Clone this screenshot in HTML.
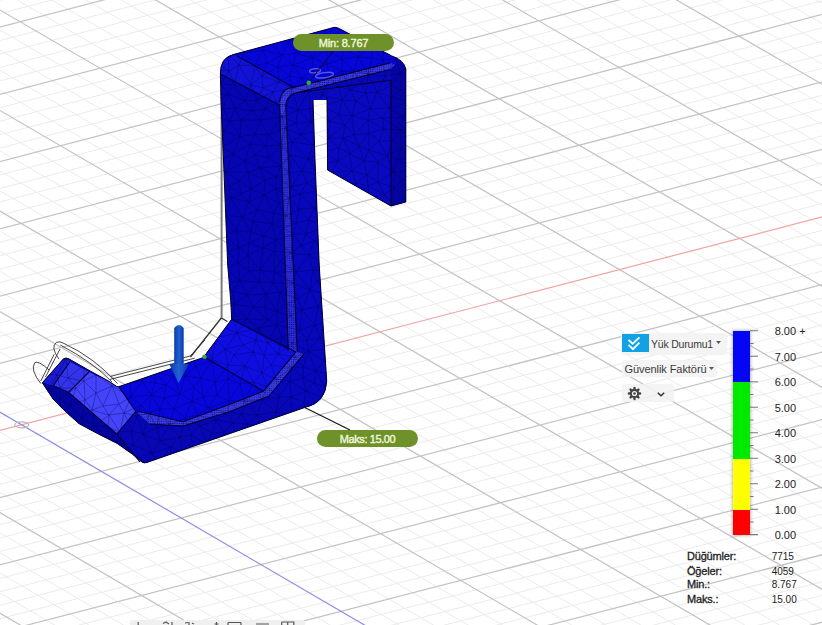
<!DOCTYPE html>
<html><head><meta charset="utf-8"><style>
html,body{margin:0;padding:0;background:#fff;width:822px;height:625px;overflow:hidden}
body{position:relative;font-family:"Liberation Sans",sans-serif}
svg.v{position:absolute;left:0;top:0}
</style></head><body>
<svg class="v" width="822" height="625" viewBox="0 0 822 625">
<defs><filter id="bl" x="-1%" y="-1%" width="102%" height="102%"><feGaussianBlur stdDeviation="0.45"/></filter></defs>
<g filter="url(#bl)"><path d="M447.1 1257.8L-1453.3 141.3M471.1 1251.8L-1429.9 135.1M495 1245.7L-1406.5 128.9M519 1239.6L-1383 122.8M566.9 1227.4L-1336.1 110.4M590.9 1221.3L-1312.7 104.2M614.9 1215.2L-1289.2 98M638.9 1209.1L-1265.8 91.8M686.9 1196.9L-1218.8 79.5M710.9 1190.8L-1195.3 73.3M735 1184.7L-1171.8 67.1M759 1178.6L-1148.3 60.9M807.1 1166.4L-1101.3 48.5M831.1 1160.3L-1077.8 42.3M855.2 1154.1L-1054.2 36.1M879.2 1148L-1030.7 29.9M927.4 1135.8L-983.6 17.5M951.5 1129.7L-960.1 11.3M975.6 1123.6L-936.5 5M999.7 1117.4L-912.9 -1.2M1047.9 1105.2L-865.8 -13.6M1072 1099L-842.2 -19.8M1096.1 1092.9L-818.6 -26M1120.3 1086.8L-795 -32.3M1168.5 1074.5L-747.8 -44.7M1192.7 1068.4L-724.2 -50.9M1216.9 1062.2L-700.6 -57.2M1241 1056.1L-676.9 -63.4M1289.4 1043.8L-629.6 -75.9M1313.6 1037.7L-606 -82.1M1337.8 1031.5L-582.3 -88.3M1362 1025.4L-558.7 -94.6M1410.4 1013L-511.3 -107.1M1434.6 1006.9L-487.6 -113.3M1458.8 1000.7L-463.9 -119.5M1483.1 994.6L-440.2 -125.8M1531.5 982.3L-392.8 -138.3M1555.8 976.1L-369.1 -144.5M1580.1 969.9L-345.4 -150.8M1604.3 963.8L-321.6 -157.1M1652.9 951.4L-274.2 -169.6M1677.2 945.2L-250.4 -175.8M1701.5 939.1L-226.6 -182.1M1725.8 932.9L-202.9 -188.4M1774.4 920.5L-155.3 -200.9M1798.7 914.4L-131.5 -207.2M1823.1 908.2L-107.8 -213.4M1847.4 902L-84 -219.7M1896.1 889.6L-36.3 -232.3M1920.4 883.4L-12.5 -238.6M1944.8 877.2L11.3 -244.8M1969.2 871L35.1 -251.1M2017.9 858.6L82.8 -263.7M2042.3 852.4L106.7 -270M2066.7 846.2L130.5 -276.3M2091.1 840L154.4 -282.6M2140 827.6L202.1 -295.1M2164.4 821.4L226 -301.4M2188.8 815.2L249.9 -307.7M2213.3 809L273.8 -314M2262.2 796.6L321.6 -326.6M2286.6 790.4L345.6 -333M2311.1 784.1L369.5 -339.3M2335.6 777.9L393.4 -345.6M2384.6 765.5L441.3 -358.2M2409.1 759.2L465.3 -364.5M2433.6 753L489.2 -370.8M2458.1 746.8L513.2 -377.1M2507.1 734.3L561.1 -389.8M2531.6 728.1L585.1 -396.1M2556.2 721.9L609.1 -402.4M2580.7 715.6L633.1 -408.8M2629.8 703.1L681.1 -421.4M2654.4 696.9L705.2 -427.8M2679 690.6L729.2 -434.1M2703.6 684.4L753.2 -440.4M2752.7 671.9L801.3 -453.1M2777.3 665.6L825.4 -459.4M2802 659.4L849.4 -465.8M2826.6 653.1L873.5 -472.1M8.7 1221.4L2916.4 479.9M-7.2 1212L2899.9 470.4M-23.1 1202.6L2883.4 461M-39.1 1193.3L2867 451.5M-70.9 1174.5L2834 432.6M-86.8 1165.2L2817.6 423.1M-102.7 1155.8L2801.1 413.7M-118.6 1146.4L2784.7 404.2M-150.4 1127.7L2751.8 385.3M-166.3 1118.3L2735.3 375.8M-182.2 1109L2718.9 366.4M-198.1 1099.6L2702.5 356.9M-229.9 1080.9L2669.6 338M-245.8 1071.5L2653.2 328.6M-261.7 1062.2L2636.7 319.2M-277.6 1052.8L2620.3 309.7M-309.3 1034.1L2587.5 290.8M-325.2 1024.8L2571.1 281.4M-341.1 1015.5L2554.7 272M-356.9 1006.1L2538.3 262.5M-388.6 987.4L2505.5 243.7M-404.5 978.1L2489.1 234.3M-420.4 968.8L2472.7 224.8M-436.2 959.4L2456.3 215.4M-467.9 940.8L2423.5 196.6M-483.7 931.4L2407.1 187.1M-499.6 922.1L2390.7 177.7M-515.4 912.8L2374.4 168.3M-547.1 894.1L2341.6 149.5M-562.9 884.8L2325.3 140.1M-578.7 875.5L2308.9 130.7M-594.6 866.2L2292.5 121.3M-626.2 847.6L2259.8 102.5M-642 838.3L2243.5 93.1M-657.8 829L2227.1 83.7M-673.6 819.6L2210.8 74.3M-705.2 801L2178.1 55.5M-721 791.7L2161.8 46.1M-736.8 782.4L2145.4 36.7M-752.6 773.1L2129.1 27.3M-784.2 754.5L2096.4 8.6M-800 745.2L2080.1 -0.8M-815.8 736L2063.8 -10.2M-831.5 726.7L2047.5 -19.6M-863.1 708.1L2014.9 -38.3M-878.9 698.8L1998.6 -47.7M-894.6 689.5L1982.3 -57.1M-910.4 680.2L1966 -66.5M-941.9 661.7L1933.4 -85.2M-957.7 652.4L1917.1 -94.6M-973.4 643.1L1900.8 -103.9M-989.2 633.9L1884.5 -113.3M-1020.6 615.3L1851.9 -132M-1036.4 606L1835.7 -141.4M-1052.1 596.8L1819.4 -150.7M-1067.9 587.5L1803.1 -160.1M-1099.3 569L1770.6 -178.8M-1115.1 559.7L1754.3 -188.1M-1130.8 550.5L1738.1 -197.5M-1146.5 541.2L1721.8 -206.8M-1177.9 522.7L1689.3 -225.5M-1193.6 513.5L1673.1 -234.8M-1209.4 504.2L1656.8 -244.2M-1225.1 495L1640.6 -253.5M-1256.5 476.5L1608.1 -272.2M-1272.2 467.2L1591.9 -281.5M-1287.9 458L1575.7 -290.8M-1303.5 448.7L1559.4 -300.2M-1334.9 430.3L1527 -318.8M-1350.6 421L1510.8 -328.1M-1366.3 411.8L1494.6 -337.4M-1382 402.6L1478.4 -346.8M-1413.3 384.1L1446 -365.4M-1429 374.9L1429.8 -374.7M-1444.6 365.7L1413.6 -384M-1460.3 356.4L1397.4 -393.3M-1491.6 338L1365 -411.9M-1507.3 328.8L1348.8 -421.2M-1522.9 319.6L1332.6 -430.5M-1538.6 310.4L1316.4 -439.8M-1569.9 291.9L1284.1 -458.4M-1585.5 282.7L1267.9 -467.7M-1601.2 273.5L1251.8 -477M-1616.8 264.3L1235.6 -486.3M-1648.1 245.9L1203.3 -504.9M-1663.7 236.7L1187.1 -514.2M-1679.3 227.5L1171 -523.5M-1694.9 218.3L1154.8 -532.8" stroke="#ebebeb" stroke-width="1" fill="none"/><path d="M423.2 1263.9L-1476.7 147.5M543 1233.5L-1359.6 116.6M662.9 1203L-1242.3 85.7M783 1172.5L-1124.8 54.7M903.3 1141.9L-1007.2 23.7M1023.8 1111.3L-889.4 -7.4M1265.2 1049.9L-653.3 -69.6M1386.2 1019.2L-535 -100.8M1507.3 988.4L-416.5 -132M1628.6 957.6L-297.9 -163.3M1750.1 926.7L-179.1 -194.6M1871.7 895.8L-60.1 -226M1993.6 864.8L59 -257.4M2115.6 833.8L178.3 -288.8M2237.7 802.8L297.7 -320.3M2360.1 771.7L417.4 -351.9M2482.6 740.6L537.2 -383.5M2605.3 709.4L657.1 -415.1M2728.1 678.1L777.3 -446.8M2851.2 646.9L897.6 -478.5M24.7 1230.8L2932.9 489.4M-55 1183.9L2850.5 442M-134.5 1137L2768.2 394.7M-214 1090.2L2686 347.5M-293.4 1043.5L2603.9 300.3M-372.8 996.8L2521.9 253.1M-452.1 950.1L2439.9 206M-531.2 903.5L2358 158.9M-610.4 856.9L2276.2 111.9M-689.4 810.3L2194.4 64.9M-768.4 763.8L2112.8 17.9M-847.3 717.4L2031.2 -29M-1004.9 624.6L1868.2 -122.6M-1083.6 578.3L1786.9 -169.4M-1162.2 532L1705.6 -216.1M-1240.8 485.7L1624.4 -262.8M-1319.2 439.5L1543.2 -309.5M-1397.6 393.3L1462.2 -356.1M-1476 347.2L1381.2 -402.6M-1554.2 301.1L1300.3 -449.1M-1632.4 255.1L1219.4 -495.6M-1710.5 209.1L1138.7 -542" stroke="#c3c3c3" stroke-width="1.25" fill="none"/><path d="M-216.3 486.6L1949.7 -75.8" stroke="#f0a3a3" stroke-width="1.2" fill="none"/><path d="M-217 285.4L1144.4 1080.6" stroke="#8c8ce8" stroke-width="1.2" fill="none"/><ellipse cx="21.7" cy="424.8" rx="7" ry="3" stroke="#b8b8b8" stroke-width="1.2" fill="none"/></g>
<g><g stroke-linejoin="round">
<defs><pattern id="dots" width="2.2" height="2.2" patternUnits="userSpaceOnUse"><rect width="2.2" height="2.2" fill="#3b3be4"/><circle cx="1.1" cy="1.1" r="0.6" fill="#101090"/></pattern></defs>
<!-- wireframe behind -->
<path d="M221.6 90L221.6 318" stroke="#7a7a7a" stroke-width="2" fill="none"/><path d="M221.3 318L190.5 357M221.3 318L227.5 321.5" stroke="#333" stroke-width="1.3" fill="none"/>
<!-- silhouette (pillar left face colour) -->
<path id="sil" d="M220.4 74Q220 58 233.2 54.6L331 28.2Q335 26.4 338.5 28.2L391.7 55.9Q404 60 405.8 69L405.8 202L391 206L327.6 170L327 97L313 99.5L315 160L319.2 265L326.7 380.7Q326 403 304.7 407.5L146.8 462.5Q144 463.5 142 462L132.3 454.1L117.1 443.4L98.9 434.3L79.1 423.7L65.4 411.5L53.3 399.3L42.3 382.8L63.5 358.8Q66 357 70 359.5L92 372L108 380.7L116.8 386.5L118.8 386.7L203.4 357.5L231.7 319.2L230.7 300L227.7 265L223.5 160L221 100Z" fill="#0505b2"/>
<!-- right flap inner face -->
<path d="M295 93L391 80.2L391 206L327.6 170L327 100L312.7 100Z" fill="#0909bf"/>
<path d="M390 69.5L395 64.5Q402 60 405.8 69L405.8 202L391 206L391 80.2Z" fill="#0505a6"/>
<!-- top surface -->
<path d="M233.2 54.6L331 28.2Q335 26.4 338.5 28.2L391.7 55.9Q400 59 395 64.5L390.2 62.9L293.7 87.4L237 55.9Z" fill="#0606d8"/>
<!-- fillet band -->
<path d="M221 74.3Q220 58 233.2 54.6L237 55.9L293.7 87.4Q281 90 279.5 102.4L279.5 105Z" fill="#1212d6"/>
<!-- inner top strip -->
<path d="M279.5 115L279.5 102.4Q281 88 293.7 87.4L390.2 62.9L395 64.5L390 69.5L295.3 93Q286 96 285.8 105.6L285.8 115Z" fill="url(#dots)"/>
<!-- inner top face under strip -->
<path d="M295.3 93L390 69.5L391 80.2Z" fill="#0808b6"/>
<!-- pillar front face -->
<path d="M285.8 105.6Q286 96 295.3 93L312.7 90.7L312.7 100L315 160L319.2 265L326.7 380.7Q326 403 304.7 407.5L269 396L304 353.8L297.3 351.9Z" fill="#0707bc"/>
<!-- pillar strip -->
<path d="M279.5 105L285.8 105.6L297.3 351.9L288.3 350.5Z" fill="url(#dots)" opacity="0.75"/>
<!-- inclined face -->
<path d="M231.7 319.2L288.3 350.5L296 351.9L263.4 391.2L203.8 356.7Z" fill="#0e0ee0"/>
<!-- inclined strip -->
<path d="M296 351.9L304 353.8L269 396L263.4 391.2Z" fill="url(#dots)"/>
<!-- floor -->
<path d="M118.8 386.7L203.4 357.5L263.4 391.2L230 404.2L183 421.8L134.8 410.5Z" fill="#0707dc"/>
<!-- front strip -->
<path d="M263.4 391.2L269 396L230 411.5L183 426.1L149.4 424L134.8 410.5L183 421.8L230 404.2Z" fill="url(#dots)"/>
<!-- lower front face -->
<path d="M134.8 410.5L149.4 424L183 426.1L230 411.5L269 396L304.7 407.5L146.8 462.5Q144 463.5 142 462L116.8 434L135.7 411.3Z" fill="#0707b6"/>
<!-- lip faces -->
<path d="M42.3 382.8L63.5 358.8Q66 357 70 359.5L70 361.7L53.2 385.8Z" fill="#1a1ad2"/>
<path d="M53.2 385.8L70 361.7L89 372L68.6 392.3Z" fill="#3333ea"/>
<path d="M68.6 392.3L89 372L108 380.7L116.8 386.5L118.8 386.7L135.7 411.3L116.8 434Z" fill="#4444fa"/>
<path d="M42.3 382.8L53.2 385.8L68.6 392.3L116.8 434L142 462L132.3 454.1L117.1 443.4L98.9 434.3L79.1 423.7L65.4 411.5L53.3 399.3Z" fill="#0404a0"/>
<clipPath id="cp"><path d="M220.4 74Q220 58 233.2 54.6L331 28.2Q335 26.4 338.5 28.2L391.7 55.9Q404 60 405.8 69L405.8 202L391 206L327.6 170L327 97L313 99.5L315 160L319.2 265L326.7 380.7Q326 403 304.7 407.5L146.8 462.5Q144 463.5 142 462L132.3 454.1L117.1 443.4L98.9 434.3L79.1 423.7L65.4 411.5L53.3 399.3L42.3 382.8L63.5 358.8Q66 357 70 359.5L92 372L108 380.7L116.8 386.5L118.8 386.7L203.4 357.5L231.7 319.2L230.7 300L227.7 265L223.5 160L221 100Z"/></clipPath><path clip-path="url(#cp)" d="M214 222L225 236M382 381L379 392M306 418L320 419M376 405L392 411M136 261L143 252M160 276L172 273M339 329L350 334M397 220L392 203M215 382L217 395M112 43L124 34M302 433L287 425M84 229L84 241M304 402L292 415M300 194L314 208M53 309L53 297M185 30L168 32M274 272L260 270M350 90L356 101M276 103L273 92M151 395L141 405M98 325L109 317M84 229L77 211M276 412L292 415M263 248L249 243M408 420L415 430M169 462L182 453M101 48L116 58M327 50L343 46M112 386L131 397M323 106L322 95M179 134L172 125M233 291L222 284M309 255L321 262M395 278L411 272M37 390L48 400M327 50L313 58M150 145L164 163M386 315L398 305M383 60L372 58M164 142L172 125M291 187L276 177M63 244L54 234M287 425L292 415M379 419L383 430M90 137L88 124M340 452L334 462M346 26L359 21M240 281L222 284M112 386L96 375M254 382L240 384M372 46L358 57M109 415L94 426M117 92L121 76M154 303L166 315M203 397L201 378M174 158L179 148M166 299L166 315M400 73L401 90M318 406L326 399M224 131L230 121M257 415L260 428M136 166L153 171M190 308L201 304M164 398L174 409M48 202L35 198M194 387L185 376M55 117L56 106M349 233L366 228M302 171L307 183M367 175L378 162M265 180L248 172M41 451L47 437M403 316L411 324M161 199L164 213M274 251L274 272M325 387L326 399M76 388L60 388M66 276L48 268M292 343L282 337M227 24L248 24M262 441L260 454M158 88L140 89M47 75L36 70M392 141L384 129M93 298L111 286M266 294L273 283M385 338L371 339M369 133L368 120M299 444L285 438M292 368L303 378M222 312L222 297M228 54L229 71M383 41L372 46M396 232L386 225M139 278L140 296M370 109L356 101M279 82L263 88M248 255L263 248M411 102L412 128M58 194L68 203M292 88L276 103M359 201L371 209M164 163L145 158M179 178L192 185M408 252L411 272M310 290L313 270M373 432L372 445M291 253L280 261M45 327L53 309M222 147L210 139M70 264L63 244M306 234L301 246M178 340L188 355M105 298L93 298M262 441L278 449M192 185L186 199M292 88L302 78M318 406L334 420M47 29L38 37M144 344L155 333M308 159L322 152M198 256L191 266M354 71L358 57M316 435L302 433M100 239L96 223M171 65L155 68M277 325L300 330M234 304L222 312M358 57L342 59M309 220L296 223M363 399L376 405M338 231L332 214M157 358L175 362M392 203L406 212M313 58L317 46M253 221L272 224M67 113L56 106M308 351L316 371M47 75L52 89M370 109L366 93M404 410L392 411M82 183L68 181M59 327L45 327M117 131L112 121M363 399L356 390M105 94L110 79M367 318L358 301M364 410L379 419M155 333L137 331M92 440L85 458M350 90L342 100M110 337L125 324M412 140L410 158M338 161L323 164M207 456L192 459M213 266L222 284M93 298L97 312M400 32L389 26M315 325L307 340M73 158L59 158M392 399L376 405M249 445L252 462M375 351L390 349M112 453L101 449M397 388L401 376M88 281L100 262M218 46L213 59M215 162L215 174M187 229L202 217M66 276L78 276M168 32L169 45M291 187L290 173M350 90L361 83M400 355L397 334M317 46L306 49M184 89L180 106M283 228L276 240M411 171L394 172M190 308L195 320M222 465L235 461M45 187L35 198M363 379L379 392M151 395L155 383M129 469L113 470M373 432L383 444M37 359L51 355M323 106L310 109M193 331L195 320M372 46L370 35M125 294L128 282M120 432L132 431M325 387L337 395M268 135L285 128M208 408L216 420M215 382L228 365M110 183L123 169M245 161L248 172M112 349L123 348M78 302L67 318M333 306L326 322M85 80L78 92M199 470L222 465M158 88L172 95M131 132L124 143M130 98L147 108M226 172L215 162M317 281L332 272M101 462L113 470M254 382L262 373M112 349L112 361M303 367L295 357M197 415L200 426M227 216L242 217M403 117L412 128M96 116L112 121M181 282L197 276M56 48L73 54M117 131L124 143M282 117L285 128M131 110L147 108M311 122L310 109M327 50L342 59M163 55L151 55M247 319L234 320M327 226L332 214M225 236L228 251M376 405L379 419M262 373L264 355M315 325L326 322M202 128L200 112M350 362L341 372M413 377L401 376M245 366L253 352M274 251L263 248M143 434L157 428M354 135L343 138M66 359L68 378M382 118L368 120M43 237L37 227M200 112L211 105M348 382L348 400M148 230L150 210M249 445L260 454M313 58L306 49M412 87L412 73M110 224L113 237M126 121L119 110M160 22L132 20M397 220L409 227M193 331L206 327M293 283L280 292M50 286L66 276M394 172L402 180M132 50L141 65M82 183L101 177M136 184L141 194M408 252L392 247M263 50L255 66M215 70L213 59M267 63L263 50M215 35L227 24M196 367L194 346M131 83L127 64M82 253L84 241M243 345L237 333M122 443L120 432M195 103L180 106M73 191L89 208M326 294L333 306M212 433L216 420M345 191L344 205M397 220L396 232M363 379L370 362M223 109L212 116M340 452L331 440M215 35L215 23M187 229L195 240M179 209L176 195M66 359L51 355M212 303L222 297M369 133L359 146M150 95L147 108M147 316L166 315M192 185L203 191M58 194L61 213M369 255L378 272M176 263L191 266M368 74L372 58M289 453L278 449M217 324L222 312M412 31L397 43M42 51L56 48M172 125L180 106M228 54L239 65M346 220L332 214M201 291L191 288M55 117L70 132M68 101L78 92M154 128L143 132M324 361L326 349M411 51L412 73M318 191L320 175M191 435L185 418M410 158L398 159M108 438L108 427M188 160L179 178M364 161L378 162M49 252L37 255M58 194L45 187M375 351L371 339M203 232L195 240M318 306L310 290M245 366L228 379M276 379L292 368M369 133L384 129M41 451L36 440M152 453L158 463M289 42L299 36M278 449L285 438M178 340L193 331M43 160L51 144M208 408L228 413M260 120L268 135M391 86L377 92M349 233L346 220M179 209L189 217M142 381L133 371M172 289L178 307M362 281L344 276M328 138L345 125M283 228L272 224M345 191L330 198M75 223L77 211M412 344L409 365M203 397L217 395M55 425L71 438M343 316L339 329M165 106L180 106M185 376L201 378M386 315L376 306M149 413L141 405M264 236L276 240M51 144L59 158M317 281L335 283M152 453L143 434M265 180L260 168M264 236L253 221M212 116L200 112M130 383L112 386M242 217L236 230M214 222L203 232M73 158L79 140M296 53L299 36M213 266L198 256M360 43L358 57M106 275L121 265M344 205L332 214M132 220L150 210M129 310L125 294M391 86L392 97M302 78L290 76M146 361L155 372M299 209L289 198M67 113L70 132M247 295L266 294M234 355L253 352M59 327L52 340M86 318L67 318M322 95L309 91M212 360L225 349M280 292L277 312M150 145L164 142M86 318L74 332M352 116L356 101M328 138L322 152M216 338L206 327M392 247L405 240M83 432L71 438M37 359L36 333M292 142L301 135M71 20L84 27M296 272L280 261M139 278L121 265M396 447L401 463M63 244L84 241M255 155L260 168M87 264L82 253M291 187L300 194M247 319L237 333M163 55L155 68M85 57L86 39M323 106L342 100M185 376L188 355M157 39L145 22M411 304L411 324M114 248L94 252M348 382L350 362M110 224L103 206M109 415L120 432M265 109L257 100M180 394L185 376M48 400L60 399M123 456L112 453M129 197L137 206M68 232L75 223M325 387L348 382M415 183L410 158M70 465L60 454M136 166L123 169M255 134L268 135M209 93L228 94M214 222L214 238M151 395L160 409M132 220L125 229M160 226L170 240M367 318L376 306M199 470L207 456M160 441L143 434M325 387L314 383M84 365L98 364M72 347L74 332M382 381L376 372M392 247L376 236M168 180L156 183M187 229L170 240M392 247L396 232M378 182L378 162M241 120L240 137M324 361L316 371M212 360L215 382M327 64L342 59M326 429L316 435M57 134L51 144M403 316L398 305M313 145L292 142M251 189L249 202M132 50L142 35M185 30L180 49M296 223L294 234M363 399L379 392M335 283L344 276M94 426L92 410M330 121L311 122M181 325L166 315M57 375L60 388M345 287L335 283M324 361L336 359M233 423L228 413M48 202L50 223M244 401L257 415M289 453L285 438M47 75L36 82M55 117L37 124M144 344L136 355M182 453L192 459M341 372L330 374M291 253L294 234M154 128L161 116M124 361L123 348M382 118L384 129M255 155L245 161M103 406L96 393M292 343L300 330M309 255L324 251M350 362L336 359M131 132L117 131M212 303L208 316M190 308L181 325M157 240L170 240M180 394L173 376M240 137L230 121M315 325L300 330M112 162L101 177M160 441L169 425M228 94L235 108M67 143L70 132M278 354L271 365M289 198L286 216M193 331L181 325M108 438L94 426M360 43L370 35M296 272L310 290M41 451L60 454M296 272L274 272M364 161L359 146M412 455L413 468M359 327L354 316M372 445L387 455M338 161L339 148M132 20L106 24M265 307L266 294M178 340L181 325M385 76L396 59M376 306L369 289M298 110L292 88M49 252L59 254M309 469L312 447M369 255L376 236M160 226L157 240M163 55L157 39M352 171L356 183M264 236L272 224M350 90L354 71M390 349L394 365M52 170L68 181M365 422L379 419M369 289L386 299M147 108L139 121M40 139L37 124M55 425L61 414M299 209L296 223M409 227L405 240M106 24L84 27M372 445L383 444M223 109L211 105M132 220L127 210M229 401L208 408M346 467L322 467M282 337L268 343M105 94L107 110M121 265L128 282M157 39L160 22M105 298L125 294M58 194L57 183M105 94L97 84M396 447L412 455M265 307L253 307M117 276L128 282M267 63L255 66M285 128L296 123M180 394L164 398M101 147L106 135M221 445L235 436M198 256L197 276M274 272L273 283M259 282L273 283M227 216L236 230M231 36L228 54M257 210L274 213M121 76L106 68M364 410L376 405M255 155L250 144M106 275L100 262M151 55L155 68M214 222L202 217M152 453L171 447M68 232L63 244M354 135L369 133M325 449L312 447M203 191L216 185M328 138L318 131M302 310L310 290M326 322L335 341M145 77L155 68M174 409L192 401M386 315L389 326M271 465L285 470M255 66L239 65M70 264L48 268M121 265L117 276M253 307L247 295M409 227L396 232M76 388L84 381M272 224L286 216M207 456L207 444M254 382L245 366M48 202L36 213M58 37L38 37M401 147L410 158M205 150L202 167M332 26L359 21M257 210L242 217M100 239L113 237M47 75L51 61M228 251L214 238M268 40L279 29M367 318L354 316M239 248L236 230M75 67L94 67M350 154L359 146M68 101L52 89M363 379L376 372M179 209L196 207M260 168L248 172M169 462L171 447M289 42L279 29M149 413L143 434M150 95L140 89M330 198L332 214M60 78L52 89M359 201L368 186M50 223L37 227M84 381L96 393M332 272L335 283M179 209L186 199M281 166L281 145M171 65L169 76M342 71L342 59M320 338L326 349M342 100L338 86M136 184L153 171M60 348L52 340M124 361L136 355M62 288L53 297M101 462L86 469M205 341L194 346M241 194L249 202M359 327L350 334M57 134L40 139M35 411L36 440M260 168L276 177M195 103L209 93M245 101L252 111M187 229L189 217M376 236L386 225M253 352L264 355M312 71L302 78M330 121L323 106M142 381L155 383M151 395L164 398M306 391L326 399M394 188L403 198M184 89L169 76M197 415L192 401M101 147L90 137M234 355L225 349M271 365L264 355M112 43L117 26M283 228L286 216M57 468L86 469M94 426L83 432M85 458L86 469M154 128L147 108M397 388L407 392M366 93L368 74M203 179L216 185M121 76L127 64M125 324L137 331M36 213L37 227M172 289L181 282M396 59L411 51M247 424L242 414M274 272L280 261M85 400L84 381M207 48L204 66M70 264L78 276M301 135L296 123M89 208L77 211M395 278L392 262M259 328L268 320M42 346L52 340M247 424L235 436M239 181L248 172M151 291L166 299M397 220L406 212M130 383L133 371M322 467L312 447M155 372L155 383M378 182L394 172M340 452L346 467M286 304L277 312M111 372L124 361M313 58L327 64M316 435L320 419M151 55L157 39M216 185L229 186M71 438L71 449M347 441L331 440M260 168L269 158M292 142L285 128M59 327L67 318M70 169L68 181M330 78L342 71M316 435L325 449M394 427L407 444M249 445L262 441M382 381L397 388M271 465L289 453M215 382L203 397M279 397L262 400M59 327L74 332M373 432L358 445M412 73L408 62M188 160L202 167M367 318L376 326M394 188L378 182M45 187L41 175M158 88L165 106M129 197L127 210M179 178L168 180M291 316L300 330M352 171L350 154M383 41L374 23M169 462L181 468M159 345L169 330M165 106L172 125M60 78L62 58M276 379L267 387M298 110L287 106M392 262L380 251M345 191L359 201M394 188L402 180M338 161L332 172M322 95L330 78M268 40L289 42M253 38L242 41M60 78L73 82M47 29L38 22M124 154L114 147M92 440L71 438M234 320L222 312M129 197L122 187M359 201L370 198M129 310L147 316M136 166L124 154M198 256L210 255M350 362L348 348M330 121L345 125M360 43L359 21M68 232L54 234M327 226L314 241M231 198L242 217M226 172L229 186M362 238L349 233M298 110L309 91M175 22L168 32M312 71L313 58M170 254L157 240M159 345L178 340M215 35L203 36M40 303L50 286M155 333L169 330M360 43L372 46M42 51L36 70M325 449L331 440M407 285L395 278M101 48L106 68M150 210L137 206M149 413L160 409M255 66L262 76M259 328L247 319M412 344L400 355M150 145L136 144M268 40L253 38M228 365L225 349M276 240L272 224M291 187L276 189M130 98L119 110M290 155L281 166M292 343L295 357M196 207L202 217M38 37L38 22M58 194L73 191M281 166L260 168M191 435L180 437M308 351L295 357M164 163L179 178M411 304L398 305M185 30L203 36M338 408L348 400M376 220L366 228M197 415L185 418M296 53L289 42M335 341L350 334M314 241L301 246M378 272L380 251M207 456L193 448M109 415L92 410M367 175L356 183M332 172L337 183M131 110L119 110M99 195L103 206M411 171L410 158M129 310L125 324M85 57L73 54M112 162L123 169M212 116L211 105M260 270L273 283M228 54L218 46M237 333L234 320M207 444L193 448M70 169L82 183M354 71L342 59M137 416L141 405M78 302L86 318M385 338L390 349M332 272L321 262M376 306L386 299M169 425L157 428M251 189L265 180M304 24L299 36M317 281L313 270M215 35L231 36M159 345L144 344M291 187L302 171M234 304L222 297M336 251L349 233M207 444L200 426M253 38L248 24M279 397L291 397M348 382L330 374M267 63L262 76M350 334L354 316M85 458L71 449M120 432L124 413M382 205L371 209M358 354L350 334M232 448L249 445M61 213L48 202M398 305L386 299M37 255L48 268M67 143L51 144M298 110L296 123M184 89L201 84M300 194L307 183M279 29L265 23M338 231L327 226M339 431L353 429M267 63L278 67M336 251L342 264M98 364L100 344M259 282L266 294M112 200L122 187M117 131L106 135M203 191L186 199M362 238L352 249M108 438L120 432M327 240L324 251M178 307L181 325M96 116L107 110M86 469L113 470M306 391L290 381M353 266L344 276M306 234L296 223M278 67L290 76M228 379L228 365M52 89L41 95M60 26L38 22M117 92L105 94M83 103L67 113M164 163L168 180M131 238L113 237M188 355L171 351M281 145L269 158M241 120L230 121M395 278L378 272M132 50L151 55M365 422L353 429M299 36L313 35M143 252L154 253M293 283L274 272M47 29L60 26M205 341L216 338M293 65L278 67M109 415L103 406M384 129L368 120M346 467L334 462M181 282L172 273M279 82L290 76M133 371L136 355M286 304L280 292M227 269L213 266M43 237L54 234M279 397L276 379M363 379L350 362M311 122L323 106M66 359L60 348M342 71L338 86M96 32L101 48M233 423L242 414M84 381L96 375M114 248L131 238M181 325L169 330M367 175L368 186M394 427L379 419M85 458L101 462M318 306L326 322M358 301L354 316M233 423L235 436M384 288L378 272M257 100L273 92M178 307L166 299M227 24L215 23M352 171L364 161M60 454L57 443M227 269L228 251M268 343L256 340M379 419L392 411M242 217L249 202M172 289L166 299M84 229L89 208M70 132L79 140M157 39L142 35M375 351L385 338M83 103L96 101M155 383L166 385M86 318L97 312M169 425L180 437M96 116L106 135M123 456L140 457M289 42L292 28M105 298L113 306M392 203L403 198M136 144L124 154M204 66L190 78M82 418L70 405M343 46L329 39M132 50L127 64M55 425L57 443M112 162L114 147M403 316L386 315M336 251L352 249M87 264L100 262M340 452L358 445M101 177L99 195M37 359L49 366M401 376L394 365M160 226L150 210M49 414L48 400M60 26L71 20M330 78L338 86M195 103L201 84M362 281L365 268M316 371L330 374M350 90L366 93M84 365L66 359M367 318L359 327M63 244L59 254M188 64L194 47M397 388L379 392M386 315L386 299M202 167L215 174M359 327L371 339M280 292L273 283M260 120L241 120M289 453L298 461M348 348L335 341M200 426L185 418M298 461L299 444M76 388L68 378M228 94L234 85M125 229L131 238M60 348L74 332M245 366L234 355M353 266L352 249M110 183L112 162M48 400L49 389M131 83L145 77M359 213L366 228M85 80L94 67M403 198L406 212M330 121L328 138M210 255L214 238M318 191L300 194M239 248L238 263M132 50L116 58M265 180L276 177M330 121L318 131M397 294L398 305M290 155L281 145M253 38L265 23M273 424L257 415M227 216L231 198M110 183L112 200M84 365L91 351M365 422L364 410M301 135L318 131M298 461L285 470M57 134L70 132M136 184L123 169M278 449L260 454M212 433L200 426M407 285L397 294M332 172L323 164M309 255L291 253M36 82L41 95M39 107L41 95M304 402L306 418M260 168L245 161M40 469L36 440M172 289L151 291M318 191L314 208M409 227L406 212M238 263L240 281M84 229L96 223M132 20L124 34M376 220L371 209M279 397L267 387M147 316L137 331M264 236L249 243M382 381L401 376M403 198L413 203M385 76L368 74M306 391L314 383M352 116L368 120M229 401L228 413M92 440L101 449M346 220L344 205M35 411L37 423M260 120L265 109M82 418L92 410M60 348L51 355M201 84L204 66M51 61L56 48M306 391L318 406M40 303L53 297M52 89L56 106M306 234L314 241M79 287L78 276M225 236L239 248M412 344L397 334M75 67L73 54M255 134L250 144M346 220L359 213M407 444L415 430M369 255L362 238M412 140L401 130M66 359L49 366M412 455L401 463M362 281L353 266M145 158L153 171M145 467L158 463M255 134L241 120M330 78L319 82M384 194L382 205M339 148L322 152M53 297L64 308M106 275L88 281M302 310L291 316M129 197L112 200M106 68L116 58M363 379L363 399M296 53L306 49M84 365L84 381M114 248L100 239M149 413L137 416M352 116L345 125M60 399L49 389M304 402L318 406M406 212L413 203M142 381L146 361M45 187L57 183M358 57L372 58M244 53L228 54M312 71L327 64M41 175L35 198M372 445L358 445M137 416L143 434M150 145L145 158M212 303L201 291M169 425L160 409M376 326L385 338M125 294L113 306M86 318L93 336M36 374L49 366M395 278L397 294M255 155L269 158M272 435L260 428M178 307L166 315M237 333L256 340M42 346L51 355M339 329L335 341M320 175L308 159M370 109L352 116M279 203L276 189M401 147L398 159M249 271L259 282M337 183L356 183M400 355L394 365M385 338L397 334M60 78L51 61M157 358L171 351M384 194L378 182M119 404L112 386M392 399L407 392M313 145L322 152M309 91L310 109M415 430L412 455M117 92L130 98M68 232L84 241M213 204L202 217M286 304L291 316M302 433L306 418M111 372L112 386M239 248L228 251M181 468L158 463M43 160L52 170M352 116L339 115M182 453L193 448M279 203L264 195M266 146L250 144M263 50L244 53M313 58L296 53M384 288L397 294M338 231L349 233M227 269L222 284M161 199L141 194M101 147L114 147M344 205L359 213M151 291L160 276M320 419L334 420M117 92L131 83M142 35L132 20M139 278L151 291M194 47L203 36M132 220L137 206M394 427L383 444M222 284L210 281M408 252L405 240M267 387L262 373M72 347L93 336M203 179L203 191M205 150L188 142M70 264L87 264M350 362L358 354M233 291L240 281M98 364L112 361M257 100L252 111M320 175L337 183M68 378L57 375M358 301L345 287M383 430L383 444M96 101L78 92M289 453L285 470M130 250L131 238M159 345L171 351M78 302L64 308M195 103L200 112M50 223L36 213M59 327L53 309M362 281L358 301M320 26L329 39M108 438L92 440M45 327L52 340M180 394L166 385M93 336L91 351M94 252L100 262M100 262L121 265M277 325L277 312M97 312L109 317M247 424L257 415M185 376L173 376M343 316L326 322M150 145L154 128M139 278L128 282M408 252L409 227M157 358L159 345M277 325L268 343M320 175L302 171M271 365L276 379M50 286L62 288M376 236L380 251M147 316L125 324M39 107L56 106M212 433L224 432M282 55L278 67M57 134L37 124M191 128L200 112M88 281L111 286M352 171L332 172M85 400L92 410M345 304L354 316M106 275L117 276M204 66L194 47M178 340L169 330M144 344L129 338M387 156L378 162M202 167L215 162M367 175L364 161M83 103L68 101M96 32L106 24M253 307L234 304M136 261L148 267M161 199L168 180M86 39L73 54M70 264L59 254M170 254L154 253M282 117L296 123M249 445L235 461M198 256L180 247M309 255L313 270M212 360L196 367M292 88L287 106M314 383L326 399M205 150L222 147M243 345L253 352M359 213L371 209M160 441L157 428M293 283L298 299M314 208L332 214M415 183L402 180M383 465L387 455M96 393L112 386M303 367L308 351M171 65L190 78M78 92L97 84M78 302L93 298M370 362L376 372M292 88L309 91M312 71L330 78M260 120L255 134M225 236L214 238M342 264L352 249M103 406L112 386M290 381L303 378M168 180L153 171M233 423L224 432M382 381L363 379M113 306L97 312M317 281L326 294M233 154L245 161M256 340L264 355M77 211L68 203M311 122L318 131M106 24L117 26M217 324L216 338M161 199L179 209M324 251L321 262M364 161L350 154M268 40L263 50M180 437L171 447M53 309L37 319M85 400L82 418M184 89L190 78M50 286L48 268M327 50L327 64M151 395L166 385M82 418L83 432M163 55L169 45M119 404L103 406M169 462L158 463M185 30L198 25M206 327L195 320M385 76L383 60M384 288L386 299M291 187L307 183M415 183L413 203M37 390L49 389M338 161L322 152M210 255L195 240M318 406L306 418M354 71L361 83M61 213L75 223M85 57L94 67M124 34L117 26M298 461L312 447M359 460L346 467M196 207L189 217M170 254L180 247M278 354L268 343M213 204L227 216M111 286L128 282M273 424L260 428M197 276L210 281M160 276L148 267M131 83L140 89M125 229L115 212M360 43L346 26M243 345L256 340M309 91L319 82M313 35L306 49M180 247L187 229M147 108L161 116M50 223L54 234M72 41L86 39M345 287L333 306M241 194L239 181M137 416L132 431M57 375L49 366M179 209L175 220M298 110L282 117M352 171L337 183M87 165L73 158M72 41L60 26M179 209L164 213M378 182L368 186M313 145L328 138M213 204L214 222M309 220L314 208M70 465L57 468M411 171L398 159M205 150L215 162M144 344L137 331M313 145L318 131M164 398L160 409M123 456L129 469M42 346L36 333M62 58L73 54M181 282L191 288M394 172L378 162M394 427L408 420M130 98L131 110M170 254L172 273M376 236L376 220M326 294L310 290M241 194L229 186M112 43L132 50M290 381L292 368M309 255L296 272M264 195L249 202M237 333L225 349M232 448L222 465M202 128L212 116M348 400L337 395M197 415L216 420M160 441L180 437M237 333L217 324M224 432L235 436M96 116L88 124M306 391L303 378M330 198L318 191M415 430L413 403M389 26L397 43M166 315L169 330M37 359L36 374M160 22L145 22M302 433L299 444M233 154L250 144M312 71L319 82M249 271L240 281M191 435L207 444M158 463L171 447M215 35L218 46M326 349L335 341M112 43L106 24M359 21L370 35M131 132L136 144M50 286L53 297M70 465L85 458M235 108L230 121M157 428L160 409M179 134L183 118M172 289L172 273M309 255L314 241M213 266L197 276M320 338L315 325M291 397L292 415M43 160L59 158M174 409L160 409M320 175L323 164M142 381L131 397M87 165L88 148M392 97L401 90M124 413L131 397M296 53L293 65M92 440L83 432M61 213L68 203M384 194L392 203M228 379L240 384M330 198L344 205M172 289L160 276M245 101L235 108M132 20L145 22M193 448L192 459M255 134L266 146M129 338L110 337M176 263L180 247M190 308L191 288M283 228L294 234M347 441L358 445M136 144L124 143M299 36L306 49M68 232L50 223M67 318L64 308M272 435L278 449M105 298L111 286M392 399L379 392M400 32L397 43M133 445L132 431M241 120L235 108M221 84L209 93M302 171L308 159M145 467L140 457M124 361L112 361M82 418L70 421M300 194L289 198M101 177L95 157M149 413L157 428M132 50L124 34M318 191L337 183M255 134L240 137M127 64L141 65M86 318L93 298M164 142L164 163M309 220L327 226M112 162L101 147M96 223L103 206M231 36L242 41M58 194L48 202M359 201L356 183M37 319L36 333M278 354L295 357M300 330L307 340M236 230L249 243M224 131L212 116M345 304L345 287M93 298L79 287M101 462L101 449M176 263L172 273M281 166L276 177M49 414L35 411M412 344L411 324M285 128L281 145M97 84L110 79M117 131L114 147M207 456L222 465M392 97L411 102M89 208L103 206M112 43L116 58M411 51L397 43M400 32L412 31M231 198L216 185M205 150L210 139M90 137L79 140M185 30L194 47M364 410L354 415M51 61L42 51M121 76L110 79M130 98L140 89M313 58L293 65M87 264L88 281M392 97L389 108M412 87L401 90M279 203L286 216M247 424L260 428M87 264L78 276M87 165L101 177M84 365L68 378M339 431L334 420M115 212L127 210M369 255L380 251M394 427L415 430M392 262L411 272M201 304L195 320M224 131L240 137M387 156L394 172M231 36L227 24M345 191L337 183M354 135L368 120M292 28L299 36M397 294L411 304M36 374L49 389M302 310L300 330M70 465L86 469M86 39L84 27M240 137L233 154M112 453L101 462M345 304L333 306M409 365L394 365M311 122L301 135M396 232L405 240M82 183L89 208M109 415L124 413M196 367L201 378M175 220L170 240M98 325L97 312M126 121L139 121M105 298L97 312M201 84L215 70M264 236L263 248M303 367L292 368M229 401L228 379M232 448L235 436M142 381L155 372M152 453L133 445M145 77L140 89M136 184L122 187M281 166L269 158M376 220L386 225M221 84L228 94M371 463L387 455M222 147L233 154M125 229L110 224M326 429L339 431M90 137L106 135M339 431L331 440M212 360L194 346M101 48L94 67M101 147L88 148M139 278L160 276M338 231L336 251M412 31L407 21M367 175L352 171M175 362L173 376M369 133L369 150M160 22L168 32M43 160L41 175M353 266L365 268M145 158L136 144M248 255L238 263M73 191L68 203M382 205L370 198M94 252L82 253M42 51L38 37M216 338L225 349M243 345L225 349M354 135L345 125M247 295L240 281M136 261L130 250M129 310L140 296M401 147L401 130M231 36L248 24M48 400L61 414M223 109L228 94M49 414L55 425M196 367L188 355M51 61L36 70M245 366L228 365M322 467L325 449M152 453L160 441M412 87L411 102M259 328L268 343M313 145L301 135M70 421L71 438M353 429L354 415M101 48L86 39M200 112L183 118M168 180L176 195M151 395L142 381M253 352L262 373M114 248L130 250M213 266L210 255M280 292L298 299M257 210L249 202M85 80L73 82M79 140L88 124M158 88L169 76M98 325L86 318M172 125L161 116M253 221L251 232M372 445L371 463M121 265L130 250M112 162L95 157M125 294L111 286M271 365L262 373M240 137L250 144M320 338L308 351M129 338L123 348M209 93L201 84M386 315L376 326M173 376L155 372M366 93L377 92M150 210L164 213M342 100L356 101M152 453L140 457M281 166L290 173M229 71L213 59M160 441L171 447M383 60L368 74M85 400L76 388M149 413L151 395M265 307L268 320M276 103L265 109M150 95L130 98M407 285L411 304M292 28L265 23M151 291L140 296M251 189L264 195M188 160L174 158M36 213L35 198M271 465L278 449M233 154L215 162M373 432L383 430M277 325L291 316M202 128L191 128M272 435L285 438M87 165L70 169M282 117L265 109M276 412L262 400M136 261L121 265M122 443L133 445M397 220L386 225M188 142L179 148M241 120L252 111M87 165L95 157M193 331L194 346M212 360L205 341M153 171L156 183M350 90L342 71M176 195L186 199M394 365L376 372M146 361L136 355M129 469L140 457M228 379L217 395M412 140L401 147M411 324L397 334M281 145L266 146M165 106L161 116M96 101L97 84M48 268L59 254M411 51L408 62M348 348L336 359M320 175L307 183M114 248L121 265M178 340L194 346M400 73L412 73M39 107L37 124M160 226L175 220M348 400L354 415M188 160L192 185M161 199L156 183M411 171L402 180M385 76L400 73M106 275L111 286M195 103L211 105M160 226L164 213M412 128L401 130M232 448L235 461M60 399L61 414M88 148L79 140M187 229L175 220M210 281L222 297M290 155L308 159M378 272L365 268M228 94L211 105M213 204L216 185M185 376L196 367M178 340L171 351M259 328L237 333M36 287L36 272M228 413L242 414M188 142L210 139M62 288L79 287M55 117L67 113M158 88L145 77M188 64L190 78M318 406L338 408M71 438L57 443M129 338L137 331M98 325L93 336M392 262L392 247M276 189L289 198M226 172L239 181M88 148L73 158M302 433L312 447M70 465L71 449M327 64L330 78M249 243L251 232M68 101L73 82M163 55L171 65M370 362L375 351M266 146L269 158M384 194L394 188M392 141L401 130M229 71L215 70M222 284L222 297M330 198L337 183M227 216L225 236M175 22L160 22M325 387L316 371M214 222L227 216M154 303L140 296M60 78L75 67M306 391L291 397M413 377L407 392M57 375L49 389M62 288L64 308M223 109L230 121M129 310L113 306M199 470L192 459M178 307L190 308M96 32L84 27M62 58L56 48M348 400L356 390M354 135L359 146M112 453L122 443M143 252L148 230M224 432L221 445M115 212L103 206M370 109L389 108M370 362L382 362M231 198L249 202M408 420L413 403M207 48L203 36M403 117L401 130M169 425L174 409M132 20L117 26M175 220L189 217M49 252L43 237M279 82L273 92M129 197L136 184M164 142L174 158M193 331L205 341M110 337L93 336M112 453L113 470M413 403L407 392M51 61L62 58M73 191L68 181M89 208L96 223M290 155L302 171M304 402L291 397M330 121L339 115M264 195L265 180M299 209L300 194M72 41L73 54M47 29L58 37M129 338L136 355M276 412L291 397M163 55L180 49M265 23L248 24M302 171L290 173M372 46L372 58M52 170L57 183M57 468L40 469M338 161L352 171M324 361L330 374M201 291L201 304M123 169L122 187M70 421L61 414M150 210L141 194M371 339L350 334M302 310L318 306M213 204L231 198M299 209L314 208M47 437L57 443M347 441L339 431M348 348L350 334M364 161L369 150M101 147L95 157M130 383L131 397M362 281L378 272M205 150L188 160M112 361L123 348M108 438L112 453M267 63L282 55M60 399L70 405M215 382L228 379M329 39L317 46M257 210L272 224M403 198L415 183M107 110L96 101M88 281L93 298M346 220L366 228M316 435L312 447M367 175L378 182M212 360L216 338M265 180L276 189M60 78L68 101M308 159L323 164M253 221L242 217M346 26L329 39M327 226L314 208M178 307L191 288M404 410L407 392M369 255L352 249M375 351L382 362M192 401L185 418M203 179L215 174M292 28L279 29M348 382L337 395M293 65L282 55M172 289L191 288M123 456L133 445M55 425L37 423M145 467L129 469M88 148L90 137M262 400L267 387M180 437L193 448M216 185L215 174M282 117L268 135M383 41L389 26M291 316L277 312M248 24L242 41M336 251L321 262M60 348L59 327M148 267L154 253M151 395L131 397M379 141L369 150M208 408L217 395M129 338L125 324M56 48L38 37M155 372L166 385M106 68L110 79M356 183L368 186M194 387L180 394M237 333L216 338M210 255L228 251M212 360L201 378M338 231L327 240M165 106L147 108M339 329L326 322M370 109L382 118M180 49L194 47M279 203L274 213M73 191L82 183M302 78L319 82M292 343L308 351M339 431L354 415M373 432L379 419M203 36L215 23M359 460L372 445M255 155L266 146M72 347L91 351M251 189L241 194M370 198L371 209M272 435L287 425M376 236L366 228M222 147L215 162M268 40L282 55M190 78L169 76M78 302L62 288M310 290L298 299M233 291L247 295M291 187L289 198M403 316L411 304M302 310L298 299M98 364L96 375M173 376L166 385M328 138L343 138M412 87L400 73M226 172L215 174M390 349L382 362M340 452L325 449M276 240L294 234M312 71L293 65M180 394L174 409M272 435L262 441M365 422L354 415M111 372L112 361M119 404L124 413M403 117L382 118M70 421L70 405M253 38L263 50M350 90L338 86M60 26L58 37M311 122L296 123M57 468L41 451M100 239L84 229M185 376L175 362M338 231L346 220M125 294L140 296M61 213L68 232M136 166L136 184M201 291L210 281M342 264L353 266M185 30L169 45M245 101L234 85M139 278L148 267M60 454L71 449M192 401L203 397M100 239L84 241M208 316L201 304M286 304L298 299M362 281L345 287M384 288L369 289M296 272L313 270M142 35L124 34M318 191L307 183M296 53L282 55M274 251L276 240M248 255L260 270M274 213L272 224M263 88L273 92M83 103L77 119M392 203L382 205M314 383L303 378M391 86L400 73M274 213L264 195M36 82L36 70M197 415L208 408M239 248L249 243M71 449L57 443M403 198L402 180M203 232L214 238M213 204L196 207M39 107L55 117M67 143L59 158M276 379L262 373M147 316L140 296M314 383L316 371M394 188L392 203M327 226L327 240M96 32L86 39M353 429L358 445M175 362L155 372M68 181L57 183M179 178L174 158M385 76L377 92M199 470L181 468M306 391L304 402M114 248L113 237M376 405L379 392M376 326L389 326M77 119L88 124M359 201L344 205M323 106L339 115M188 142L188 160M124 413L132 431M76 388L70 405M403 316L389 326M309 469L298 461M347 441L353 429M198 25L215 23M195 103L184 89M316 435L331 440M110 337L109 317M88 148L95 157M290 155L290 173M268 343L264 355M158 88L155 68M222 147L240 137M299 444L312 447M359 201L359 213M244 53L242 41M207 456L221 445M53 309L64 308M212 116L230 121M207 48L213 59M363 399L348 400M350 154L343 138M157 240L154 253M89 208L99 195M215 35L207 48M383 465L401 463M264 236L251 232M397 294L386 299M47 437L55 425M66 359L57 375M287 425L306 418M201 291L197 276M36 82L52 89M45 187L48 202M304 24L313 35M320 175L332 172M207 444L221 445M194 387L192 401M309 469L322 467M234 304L234 320M409 227L413 203M326 399L337 395M137 416L124 413M72 41L84 27M112 43L101 48M243 345L234 355M234 304L247 295M326 349L336 359M239 181L229 186M61 213L77 211M192 185L203 179M125 229L113 237M208 316L195 320M276 103L287 106M36 374L57 375M120 432L108 427M249 445L235 436M146 361L133 371M143 252L131 238M359 460L371 463M282 117L260 120M298 110L310 109M202 128L188 142M341 372L336 359M195 103L183 118M136 144L143 132M273 424L287 425M292 343L307 340M382 362L376 372M408 420L392 411M377 92L368 74M282 117L287 106M308 351L307 340M145 158L136 166M259 282L240 281M343 316L354 316M84 365L96 375M292 88L273 92M400 73L408 62M41 175L57 183M224 131L202 128M260 270L259 282M85 400L70 405M394 427L396 447M137 206L127 210M346 26L343 46M172 125L183 118M251 189L239 181M36 440L37 423M112 200L103 206M251 85L255 66M365 422L373 432M392 399L404 410M332 272L313 270M245 366L240 384M326 429L320 419M175 22L198 25M191 128L183 118M325 387L330 374M131 110L139 121M191 266L197 276M67 113L68 101M291 253L276 240M274 251L260 270M318 306L333 306M55 425L70 421M78 302L79 287M387 455L383 444M107 110L119 110M358 301L345 304M72 347L60 348M392 97L377 92M342 264L344 276M320 338L335 341M289 453L299 444M191 128L188 142M369 289L378 272M394 365L382 362M257 415L242 414M332 26L346 26M203 232L202 217M268 135L281 145M112 162L124 154M66 276L79 287M340 452L359 460M235 108L252 111M394 188L394 172M208 316L206 327M108 438L101 449M72 41L56 48M221 84L215 70M401 147L387 156M164 163L174 158M401 376L409 365M48 400L35 411M245 101L257 100M342 264L321 262M75 67L62 58M382 118L401 130M205 341L206 327M132 220L148 230M83 432L70 421M180 247L195 240M84 229L75 223M75 67L73 82M112 349L98 364M251 85L234 85M194 387L201 378M150 145L143 132M131 132L139 121M184 89L172 95M326 294L345 287M188 64L204 66M155 68L141 65M213 204L203 191M400 73L396 59M358 354L371 339M332 26L320 26M253 38L244 53M290 381L279 397M164 163L153 171M382 118L389 108M309 469L285 470M348 382L341 372M263 248L276 240M362 238L366 228M376 236L396 232M67 143L79 140M327 226L306 234M293 65L290 76M93 336L100 344M73 191L77 211M249 271L260 270M273 424L276 412M348 382L356 390M72 41L58 37M216 420L228 413M94 252L87 264M292 88L290 76M47 75L60 78M212 433L221 445M67 143L73 158M55 117L57 134M251 85L239 65M49 414L37 423M324 361L308 351M383 41L397 43M304 24L320 26M392 399L397 388M384 194L368 186M52 170L59 158M274 251L291 253M58 194L68 181M385 76L391 86M78 92L73 82M322 152L323 164M338 161L350 154M260 270L263 248M343 316L350 334M217 324L234 320M72 41L71 20M82 418L94 426M316 435L306 418M279 203L289 198M366 93L356 101M58 37L56 48M164 398L166 385M63 244L82 253M379 141L392 141M224 131L222 147M47 437L36 440M330 198L314 208M136 261L139 278M155 333L166 315M373 432L353 429M161 199L150 210M213 266L210 281M85 57L101 48M181 468L192 459M49 252L63 244M49 389L60 388M396 59L397 43M117 92L107 110M110 224L100 239M245 366L262 373M116 58L127 64M223 109L235 108M392 141L401 147M141 194L137 206M233 423L216 420M194 387L203 397M37 390L36 374M392 141L387 156M68 378L60 388M150 95L165 106M96 393L92 410M222 465L221 445M107 110L112 121M286 304L302 310M338 408L326 399M105 94L96 101M203 179L202 167M343 316L345 304M397 334L389 326M97 84L94 67M209 93L211 105M326 294L335 283M103 406L92 410M400 355L409 365M106 68L97 84M37 255L36 272M383 41L383 60M376 326L359 327M274 213L286 216M254 382L244 401M180 49L169 45M157 358L146 361M308 159L292 142M142 35L145 22M182 453L180 437M91 351L100 344M229 71L234 85M247 319L268 320M180 247L170 240M110 337L112 349M382 205L386 225M111 286L117 276M179 178L176 195M112 121L106 135M85 400L96 393M276 412L279 397M379 141L369 133M317 281L310 290M266 294L277 312M392 399L392 411M226 172L248 172M244 401L262 400M384 194L370 198M302 78L309 91M92 440L94 426M112 121L119 110M282 337L300 330M192 185L202 167M170 254L160 276M170 254L176 263M336 251L324 251M152 453L145 467M175 362L171 351M61 213L50 223M146 361L144 344M309 255L301 246M140 296L128 282M70 405L61 414M148 230L131 238M383 465L371 463M338 408L334 420M259 328L277 325M227 269L240 281M123 456L122 443M370 109L377 92M359 21L374 23M94 426L108 427M117 92L119 110M348 348L358 354M306 418L292 415M165 106L172 95M396 59L383 60M207 48L218 46M268 40L265 23M52 170L41 175M329 39L313 35M229 401L240 384M126 121L112 121M229 71L239 65M346 467L371 463M94 252L100 239M343 316L333 306M129 197L141 194M251 85L257 100M392 247L380 251M123 456L113 470M208 316L217 324M369 255L365 268M92 440L71 449M179 134L188 142M212 360L228 365M208 408L192 401M124 154L124 143M370 362L358 354M52 340L51 355M67 318L74 332M202 128L210 139M70 132L88 124M302 78L293 65M370 35L374 23M326 429L334 420M143 252L148 267M377 92L389 108M303 367L303 378M198 256L195 240M133 371L111 372M189 217L202 217M39 107L36 82M251 85L262 76M143 252L157 240M366 93L361 83M40 303L37 319M342 100L339 115M169 425L185 418M295 357L292 368M70 169L59 158M303 367L316 371M343 46L342 59M212 303L222 312M180 394L192 401M110 224L115 212M40 303L36 287M376 326L371 339M338 408L337 395M110 183L99 195M332 26L329 39M67 143L57 134M392 262L378 272M268 320L277 325M326 429L331 440M395 278L384 288M327 64L342 71M251 85L245 101M207 48L194 47M49 252L54 234M171 65L180 49M236 230L251 232M131 83L141 65M228 54L213 59M396 59L408 62M87 165L82 183M382 381L394 365M37 390L35 411M263 50L282 55M48 268L36 272M290 155L292 142M412 140L412 128M124 413L141 405M390 349L397 334M70 264L66 276M359 213L376 220M241 194L231 198M271 465L252 462M109 415L119 404M201 291L222 297M114 147L106 135M376 220L382 205M231 198L229 186M278 354L292 343M293 283L296 272M66 359L72 347M383 41L396 59M375 351L358 354M85 458L101 449M304 24L292 28M313 270L321 262M411 171L415 183M43 160L40 139M132 220L131 238M325 449L334 462M154 128L172 125M369 289L358 301M369 255L353 266M191 288L201 304M130 383L142 381M224 131L210 139M362 238L376 236M328 138L339 148M411 51L412 31M70 264L82 253M265 307L277 312M133 371L124 361M229 401L242 414M143 434L133 445M180 437L185 418M57 468L60 454M110 337L100 344M133 445L140 457M248 255L249 243M364 410L348 400M172 95L169 76M212 303L201 304M234 304L233 291M292 88L279 82M143 132L139 121M198 25L203 36M411 102L401 90M254 382L262 400M354 71L368 74M336 251L327 240M143 434L132 431M359 146L369 150M157 39L169 45M278 67L262 76M253 352L256 340M157 39L168 32M264 195L276 189M130 98L131 83M391 86L401 90M244 53L255 66M385 338L389 326M217 324L206 327M317 46L313 35M396 447L387 455M49 366L51 355M266 294L280 292M252 462L260 454M370 362L350 362M316 371L303 378M188 160L179 148M98 325L110 337M359 460L358 445M283 228L296 223M407 392L401 376M279 82L262 76M265 109L273 92M299 209L286 216M201 84L190 78M253 307L266 294M238 263L228 251M279 82L278 67M271 465L260 454M191 435L193 448M403 316L397 334M379 141L384 129M277 325L282 337M136 355L123 348M182 453L171 447M85 80L75 67M228 54L242 41M287 425L285 438M326 294L318 306M301 135L285 128M397 220L382 205M40 303L53 309M248 255L239 248M396 447L383 444M367 318L386 315M191 128L179 134M215 382L201 378M262 400L257 415M175 22L185 30M260 120L252 111M221 84L229 71M273 424L272 435M106 135L88 124M119 404L131 397M123 169L124 154M290 381L291 397M191 435L200 426M298 110L311 122M225 236L236 230M196 207L186 199M345 287L344 276M278 354L264 355M343 138L345 125M313 145L308 159M413 377L413 403M290 173L276 177M154 128L139 121M349 233L352 249M253 221L257 210M322 467L334 462M85 80L97 84M52 340L36 333M268 320L277 312M155 68L169 76M50 223L43 237M229 401L217 395M411 102L389 108M296 223L286 216M350 154L339 148M363 379L348 382M83 103L88 124M94 252L84 241M88 281L78 276M407 444L412 455M293 283L273 283M208 408L203 397M339 148L343 138M401 463L413 468M111 372L96 375M56 106L41 95M192 185L176 195M112 200L99 195M83 103L78 92M407 444L396 447M322 95L310 109M110 224L96 223M170 254L170 240M96 116L96 101M233 423L247 424M181 282L191 266M122 443L132 431M110 183L122 187M327 50L329 39M245 161L250 144M239 65L234 85M244 53L239 65M327 50L317 46M368 74L361 83M151 55L141 65M394 427L392 411M302 433L285 438M70 169L73 158M290 381L276 379M231 36L218 46M131 110L126 121M276 103L282 117M345 191L356 183M88 281L79 287M301 246L294 234M145 77L141 65M180 106L183 118M394 427L383 430M76 388L60 399M179 134L179 148M113 306L109 317M389 26L407 21M233 291L222 297M93 336L74 332M47 437L37 423M242 217L251 232M164 142L179 148M278 354L282 337M106 68L94 67M40 139L51 144M309 220L306 234M262 441L260 428M164 142L154 128M245 101L228 94M182 453L181 468M234 355L228 365M296 272L291 253M174 409L185 418M292 142L281 145M368 186L370 198M383 41L370 35M372 46L383 60M342 100L352 116M276 412L257 415M175 362L188 355M159 345L155 333M121 76L116 58M302 310L315 325M370 109L368 120M306 234L294 234M324 251L314 241M322 95L338 86M253 307L268 320M129 310L109 317M378 162L369 150M229 401L244 401M224 432L216 420M136 184L156 183M147 316L155 333M226 172L216 185M41 451L40 469M354 415L334 420M131 132L126 121M318 406L320 419M387 156L398 159M338 408L354 415M276 189L276 177M413 403L404 410M143 252L130 250M340 452L347 441M263 88L257 100M109 415L108 427M320 26L313 35M315 325L318 306M291 253L301 246M68 101L56 106M408 252L392 262M400 32L407 21M157 358L155 372M403 117L411 102M191 288L197 276M130 383L111 372M117 131L126 121M96 393L96 375M50 286L36 272M251 189L248 172M50 286L36 287M363 379L356 390M358 57L368 74M342 264L332 272M125 324L109 317M387 156L369 150M37 255L37 227M77 119L70 132M221 84L201 84M263 88L262 76M403 117L389 108M131 397L141 405M244 401L240 384M226 172L245 161M110 183L101 177M154 303L166 299M221 84L234 85M259 328L256 340M52 170L70 169M212 433L207 444M157 358L144 344M60 399L60 388M226 172L233 154M160 276L154 253M37 255L43 237M400 355L390 349M41 451L57 443M327 240L314 241M332 272L344 276M343 138L359 146M413 377L409 365M84 229L68 232M180 247L191 266M204 66L213 59M249 271L238 263M131 132L143 132M320 338L307 340M249 271L248 255M160 226L148 230M227 269L238 263M257 210L264 195M175 220L164 213M49 252L48 268M196 207L203 191M276 412L287 425M235 461L252 462M253 307L247 319M181 325L195 320M265 109L252 111M108 438L122 443M110 337L123 348M145 158L124 154M188 64L171 65M362 281L369 289M121 76L131 83M249 445L247 424M98 364L91 351M376 306L358 301M259 282L247 295M83 103L96 116M358 57L343 46M117 92L110 79M132 220L115 212M112 349L100 344M84 365L72 347M408 420L404 410M336 359L335 341M98 364L111 372M208 316L222 312M278 354L292 368M45 327L36 333M112 43L96 32M247 319L234 304M407 285L411 272M195 240L214 238M322 95L319 82M45 327L37 319M112 200L127 210M251 85L263 88M389 26L374 23M67 113L77 119M274 251L280 261M336 359L330 374M354 71L342 71M187 229L203 232M161 199L176 195M141 194L156 183M213 266L228 251M82 183L99 195M191 266L172 273M268 135L266 146M115 212L112 200M216 420L200 426M164 142L179 134M154 303L151 291M124 143L114 147M394 172L398 159M387 455L401 463M254 382L267 387M360 43L343 46M379 141L387 156M384 129L401 130M364 410L363 399M157 240L148 230M188 355L194 346M67 318L53 309M151 55L142 35M114 248L100 262M68 378L84 381M271 365L292 368M320 338L326 322M289 42L282 55M232 448L221 445M345 125L339 115M204 66L215 70M85 57L75 67M49 414L61 414M154 303L147 316M180 106L172 95M158 88L150 95M188 64L180 49M249 445L260 428M354 135L352 116M322 95L342 100M308 351L326 349M293 283L310 290M37 359L42 346M66 276L62 288M309 220L299 209M244 401L242 414" stroke="#000050" stroke-opacity="0.42" stroke-width="0.8" fill="none"/>
<!-- edges -->
<path d="M237 55.9L293.7 87.4M221 74.3L279.5 105L288.3 350.5M285.8 105.6L297.3 351.9M293.7 87.4L390.2 62.9M295.3 93L390 69.5M295 93L391 80.2L391 206M231.7 319.2L296 351.9M203.8 356.7L263.4 391.2M134.8 410.5L183 421.8L230 404.2L263.4 391.2L296 351.9M149.4 424L183 426.1L230 411.5L269 396L304 353.8M53.2 385.8L70 361.7M68.6 392.3L89 372M53.2 385.8L68.6 392.3L116.8 434L135.7 411.3L118.8 386.7M116.8 434L140 462M279.5 102.4Q281 88 293.7 87.4M285.8 105.6Q286 96 295.3 93" stroke="#000038" stroke-width="1.1" fill="none"/>
<path d="M313 99.5L315 160L319.2 265L326.7 380.7Q326 403 304.7 407.5L146.8 462.5Q144 463.5 142 462L132.3 454.1L117.1 443.4L98.9 434.3L79.1 423.7L65.4 411.5L53.3 399.3L42.3 382.8L63.5 358.8Q66 357 70 359.5L92 372L108 380.7L116.8 386.5L118.8 386.7L203.4 357.5L231.7 319.2L230.7 300L227.7 265L223.5 160L221 100L220.4 74Q220 58 233.2 54.6L331 28.2Q335 26.4 338.5 28.2L391.7 55.9Q404 60 405.8 69L405.8 202L391 206L327.6 170L327 97" stroke="#00002a" stroke-width="1" fill="none"/>
<!-- wire lines -->
<path d="M110 376.5L190.3 356L204.9 340M110 379.4L194.7 358.2M40.8 383.5Q30 370 34.7 362.8Q38 360 49.3 370.1M59 359.2Q50 347 56.6 342.2Q60 341 63.9 343.4Q95 358 117.5 383.5M60.3 345Q93 362 112 382M40.8 381L54.2 354.3M45.5 377L60 349" stroke="#333" stroke-width="0.9" fill="none"/>
<!-- arrow -->
<defs><linearGradient id="ag" x1="0" x2="1" y1="0" y2="0"><stop offset="0" stop-color="#0c3aa6"/><stop offset="0.5" stop-color="#2062d4"/><stop offset="1" stop-color="#0c3aa6"/></linearGradient></defs>
<path d="M174.2 328Q178.9 322 183.7 328L183.7 364.1L174.2 364.1Z" fill="url(#ag)"/>
<path d="M169.1 364.1L188.8 364.1L178.6 383Z" fill="url(#ag)"/>
<ellipse cx="315" cy="70.8" rx="5.5" ry="2" fill="none" stroke="#5656e4" stroke-width="1.4" transform="rotate(-6 315 70.8)"/><ellipse cx="324.5" cy="75.2" rx="9" ry="2.6" fill="none" stroke="#5656e4" stroke-width="1.4" transform="rotate(-8 324.5 75.2)"/>
<!-- leader lines -->
<path d="M308.7 82.7L333.3 51" stroke="#0a0a20" stroke-width="1" fill="none"/>
<circle cx="308.7" cy="82.7" r="2.2" fill="#30b030"/>
<circle cx="204.5" cy="356.8" r="2.2" fill="#30b030"/>
<path d="M304.7 407.5L350 430" stroke="#111" stroke-width="1.1" fill="none"/>
<!-- labels -->
<rect x="293" y="34" width="101" height="17" rx="8.5" fill="#6e9229"/>
<text x="343.5" y="46.5" text-anchor="middle" font-family="Liberation Sans" font-size="11" letter-spacing="-0.18" fill="#eef7dc" stroke="#eef7dc" stroke-width="0.4">Min: 8.767</text>
<rect x="317" y="430" width="101" height="17" rx="8.5" fill="#6e9229"/>
<text x="367.5" y="442.5" text-anchor="middle" font-family="Liberation Sans" font-size="11" letter-spacing="-0.4" fill="#eef7dc" stroke="#eef7dc" stroke-width="0.4">Maks: 15.00</text>
</g>
</g>
</svg>
<div style="position:absolute;left:621px;top:332.5px;width:106px;height:22px;background:rgba(242,242,242,0.88);border-radius:2px"></div>
<div style="position:absolute;left:622.3px;top:333.7px;width:26.6px;height:18.6px;background:#12a1e3"></div>
<svg style="position:absolute;left:622.3px;top:333.7px" width="27" height="19" viewBox="0 0 27 19"><path d="M6.5 6L10.7 9.8L17.4 3.4M6.5 10.9L11 15.1L17.4 8.7" stroke="#f4ffff" stroke-width="1.9" fill="none"/></svg>
<div style="position:absolute;left:651px;top:337.5px;font-size:10.5px;line-height:13px;letter-spacing:-0.2px;color:#3a3a3a;white-space:nowrap">Yük Durumu1</div>
<svg style="position:absolute;left:716px;top:341px" width="6" height="4"><path d="M0 0L5 0L2.5 3Z" fill="#555"/></svg>
<div style="position:absolute;left:622px;top:360px;width:95px;height:16.5px;background:rgba(242,242,242,0.88);border-radius:2px"></div>
<div style="position:absolute;left:624.5px;top:362.5px;font-size:11px;line-height:13px;letter-spacing:-0.07px;color:#3a3a3a;white-space:nowrap">Güvenlik Faktörü</div>
<svg style="position:absolute;left:708.5px;top:367px" width="6" height="4"><path d="M0 0L5 0L2.5 3Z" fill="#555"/></svg>
<div style="position:absolute;left:622px;top:384px;width:52px;height:18px;background:rgba(242,242,242,0.88);border-radius:2px"></div>
<svg style="position:absolute;left:626.7px;top:386.2px" width="15" height="15" viewBox="-7.5 -7.5 15 15"><g stroke="#454545" stroke-width="2.4" stroke-linecap="round"><path d="M0 -5.6V5.6M-5.6 0H5.6M-3.96 -3.96L3.96 3.96M-3.96 3.96L3.96 -3.96"/></g><circle r="4.7" fill="#454545"/><circle r="2.6" fill="#f2f2f2"/><circle r="1.3" fill="#454545"/></svg>
<svg style="position:absolute;left:656.5px;top:391.5px" width="8" height="5"><path d="M0.8 0.8L4 3.8L7.2 0.8" stroke="#333" stroke-width="1.5" fill="none"/></svg>
<div style="position:absolute;left:732.9px;top:330.8px;width:17.3px;height:203.8px;box-shadow:0 0 3px 1px rgba(0,0,0,0.25)"></div>
<div style="position:absolute;left:732.9px;top:330.8px;width:17.3px;height:51.1px;background:#0505f5"></div>
<div style="position:absolute;left:732.9px;top:381.9px;width:17.3px;height:76.7px;background:#00ea00"></div>
<div style="position:absolute;left:732.9px;top:458.6px;width:17.3px;height:51px;background:#ffff00"></div>
<div style="position:absolute;left:732.9px;top:509.6px;width:17.3px;height:25px;background:#ff0000"></div>
<svg style="position:absolute;left:750px;top:325px" width="10" height="215"><path d="M0 5.8H8M0 18.55H3.6M0 31.3H8M0 44.05H3.6M0 56.8H8M0 69.55H3.6M0 82.3H8M0 95.05H3.6M0 107.8H8M0 120.55H3.6M0 133.3H8M0 146.05H3.6M0 158.8H8M0 171.55H3.6M0 184.3H8M0 197.05H3.6M0 209.6H8" stroke="#777" stroke-width="1.1" fill="none"/></svg>
<div style="position:absolute;left:774.7px;top:0;font-size:11px;line-height:13px;color:#222;white-space:nowrap">
<div style="position:absolute;top:325.3px">8.00&nbsp;+</div>
<div style="position:absolute;top:350.8px">7.00</div>
<div style="position:absolute;top:376.3px">6.00</div>
<div style="position:absolute;top:401.8px">5.00</div>
<div style="position:absolute;top:427.3px">4.00</div>
<div style="position:absolute;top:452.8px">3.00</div>
<div style="position:absolute;top:478.3px">2.00</div>
<div style="position:absolute;top:503.8px">1.00</div>
<div style="position:absolute;top:529.1px">0.00</div>
</div>
<div style="position:absolute;left:687px;top:0;font-size:11px;line-height:13px;color:#222;white-space:nowrap;letter-spacing:-0.19px;-webkit-text-stroke:0.3px #222">
<div style="position:absolute;top:550.3px">Düğümler:</div>
<div style="position:absolute;top:564.6px">Öğeler:</div>
<div style="position:absolute;top:578.3px">Min.:</div>
<div style="position:absolute;top:592.6px">Maks.:</div>
</div>
<div style="position:absolute;left:771.7px;top:0;font-size:10px;line-height:12px;color:#222;white-space:nowrap">
<div style="position:absolute;top:551.3px">7715</div>
<div style="position:absolute;top:565.6px">4059</div>
<div style="position:absolute;top:579.3px">8.767</div>
<div style="position:absolute;top:593.6px">15.00</div>
</div>
<div style="position:absolute;left:129.8px;top:619.9px;width:175px;height:6px;background:#f0f0f0;border-radius:3px 3px 0 0"></div>
<svg style="position:absolute;left:129.8px;top:619.9px" width="175" height="6"><path d="M8.2 2V6M33 3.5L36 2L39 4M42 2V6M55 3L58 2.5M59 2V6M62 3L64 4M86.5 2V6M84.5 4H88.5M98 2.5H111M98 2.5V6M111 2.5V6M126 4H139M151.7 2H163.8V6M151.7 2V6M157.7 2V6" stroke="#555" stroke-width="1.2" fill="none"/></svg>

</body></html>
